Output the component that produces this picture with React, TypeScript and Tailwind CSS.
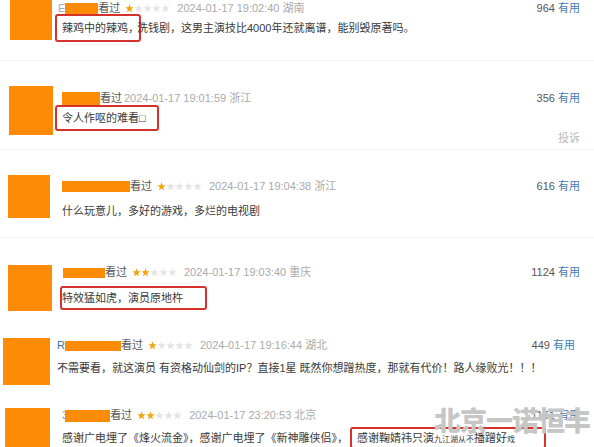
import React from 'react';

const font = { fontFamily: '"Liberation Sans", "Noto Sans CJK SC", sans-serif' };

type Row = {
  row: string;
  avatar: string;
  body: string;
  prefix?: string;
  prefixCls?: string;
  bar: string;
  stars: number;
  date: string;
  count: string;
  content: React.ReactNode;
  contentCls: string;
  extra?: boolean;
};

const Star = ({ on }: { on: boolean }) => (
  <svg viewBox="0 0 10 10" className={on ? 'h-[9px] w-[9px] fill-[#f3a30f]' : 'h-[9px] w-[9px] fill-[#e3e3e3]'}>
    <polygon points="5,0.4 6.2,3.6 9.6,3.7 6.9,5.8 7.9,9.3 5,7.3 2.1,9.3 3.1,5.8 0.4,3.7 3.8,3.6" />
  </svg>
);

const Box = ({ cls, children }: { cls: string; children: React.ReactNode }) => (
  <span className={`border-2 border-[#d5322c] rounded-[3px] bg-white ${cls}`}>{children}</span>
);

const rows: Row[] = [
  {
    row: 'h-[61px] border-b border-[#f3f3f3]',
    avatar: 'ml-[10px] -mt-[3px] w-[42px] h-[43px]',
    body: 'ml-[10px] pt-[2px] pr-[14px]',
    prefix: 'E',
    prefixCls: '-ml-[4px] text-[#9aa9c0]',
    bar: 'w-[33px] h-[11px]',
    stars: 1,
    date: '2024-01-17 19:02:40 湖南',
    count: '964',
    contentCls: 'mt-[6px]',
    content: (
      <>
        <Box cls="-ml-[7px] pl-[5px] -mr-[4px] py-[6px]">辣鸡中的辣鸡，</Box>洗钱剧，这男主演技比4000年还就离谱，能别毁原著吗。
      </>
    ),
  },
  {
    row: 'h-[89px] border-b border-[#f3f3f3]',
    avatar: 'ml-[9px] mt-[25px] w-[44px] h-[49px]',
    body: 'ml-[9px] pt-[31px] pr-[14px]',
    bar: 'w-[38px] h-[14px]',
    stars: 0,
    date: '2024-01-17 19:01:59 浙江',
    count: '356',
    contentCls: 'mt-[6px]',
    extra: true,
    content: (
      <Box cls="-ml-[7px] pl-[5px] pr-[11px] -mr-[13px] py-[5px]">令人作呕的难看□</Box>
    ),
  },
  {
    row: 'h-[88px] border-b border-[#f3f3f3]',
    avatar: 'ml-[8px] mt-[25px] w-[42px] h-[43px]',
    body: 'ml-[12px] pt-[30px] pr-[14px]',
    bar: 'w-[68px] h-[11px]',
    stars: 1,
    date: '2024-01-17 19:04:38 浙江',
    count: '616',
    contentCls: 'mt-[11px]',
    content: <>什么玩意儿，多好的游戏，多烂的电视剧</>,
  },
  {
    row: 'h-[87px]',
    avatar: 'ml-[8px] mt-[27px] w-[44px] h-[46px]',
    body: 'ml-[10px] pt-[28px] pr-[14px]',
    bar: 'w-[42px] h-[10px] ml-[1px]',
    stars: 2,
    date: '2024-01-17 19:03:40 重庆',
    count: '1124',
    contentCls: 'mt-[12px]',
    content: (
      <Box cls="-ml-[2px] pr-[22px] -mr-[24px] py-[4px]">特效猛如虎，演员原地杵</Box>
    ),
  },
  {
    row: 'h-[70px]',
    avatar: 'ml-[3px] mt-[13px] w-[47px] h-[47px]',
    body: 'ml-[7px] pt-[14px] pr-[19px]',
    prefix: 'R',
    prefixCls: 'text-[#3f6f9f]',
    bar: 'w-[56px] h-[10px]',
    stars: 1,
    date: '2024-01-17 19:16:44 湖北',
    count: '449',
    contentCls: 'mt-[9px]',
    content: <>不需要看，就这演员 有资格动仙剑的IP？直接1星 既然你想蹭热度，那就有代价！路人缘败光！！！</>,
  },
  {
    row: 'h-[60px]',
    avatar: 'ml-[5px] mt-[13px] w-[45px] h-[45px]',
    body: 'ml-[12px] pt-[14px] pr-[14px]',
    prefix: '3',
    prefixCls: 'text-[#999]',
    bar: 'w-[45px] h-[12px] -ml-[3px]',
    stars: 2,
    date: '2024-01-17 23:20:53 北京',
    count: '1151',
    contentCls: 'mt-[9px]',
    content: (
      <>
        感谢广电埋了《烽火流金》，感谢广电埋了《新神雕侠侣》，
        <Box cls="ml-[2px] pl-[5px] pr-[29px] py-[3px]">
          感谢鞠婧祎只演<span className="text-[8px]">九江湖从不</span>播蹭好<span className="text-[8px]">戏</span>
        </Box>
      </>
    ),
  },
];

export default function App() {
  return (
    <div className="relative w-[594px] h-[447px] overflow-hidden bg-white text-[11px]" style={font}>
      {rows.map((r, i) => (
        <div key={i} className={`flex items-start ${r.row}`}>
          <div className={`shrink-0 bg-[#fd8b06] ${r.avatar}`} />
          <div className={`flex-1 min-w-0 flex flex-col ${r.body}`}>
            <div className="flex items-center h-[13px] leading-[13px]">
              {r.prefix && <span className={r.prefixCls}>{r.prefix}</span>}
              <div className={`bg-[#fd8b06] ${r.bar}`} />
              <span className="text-[#555]">看过</span>
              {r.stars > 0 && (
                <span className="ml-[5px] flex">
                  {[0, 1, 2, 3, 4].map((s) => (
                    <Star key={s} on={s < r.stars} />
                  ))}
                </span>
              )}
              <span className={r.stars > 0 ? 'ml-[7px] text-[#aaa]' : 'ml-[2px] text-[#aaa]'}>{r.date}</span>
              <span className="ml-auto text-[#555]">
                {r.count} <span className="text-[#3f7cb6]">有用</span>
              </span>
            </div>
            <div className={`leading-[14px] whitespace-nowrap text-[#3a3a3a] ${r.contentCls}`}>{r.content}</div>
            {r.extra && <div className="mt-[6px] text-right leading-[14px] text-[#bbb]">投诉</div>}
          </div>
        </div>
      ))}
      <div className="absolute left-[434px] top-[402px] text-[27px] leading-[40px] font-black tracking-[-1px] text-[#c6c6c6]">
        北京一诺恒丰
      </div>
    </div>
  );
}
